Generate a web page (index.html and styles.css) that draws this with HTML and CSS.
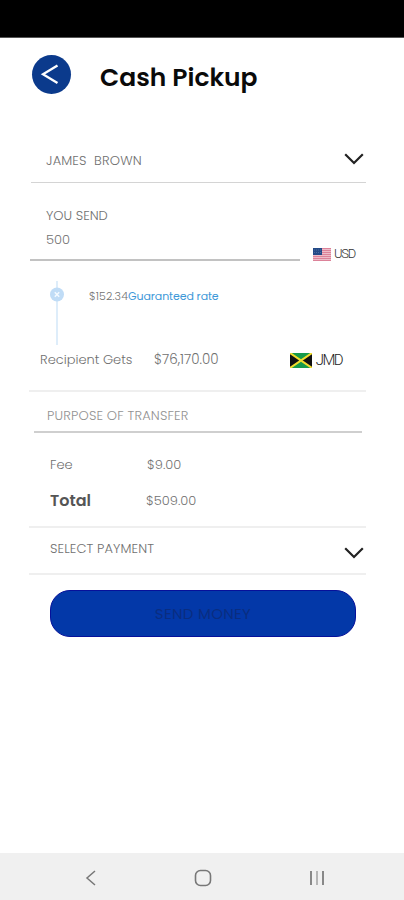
FILE: index.html
```html
<!DOCTYPE html>
<html lang="en">
<head>
  <meta charset="UTF-8">
  <meta name="viewport" content="width=device-width, initial-scale=1.0">
  <title>Cash Pickup</title>
  <link rel="stylesheet" href="styles.css">
</head>
<body>
  <div class="status-bar"></div>

  <!-- Header -->
  <header class="header">
    <button class="back-btn" type="button" aria-label="Back">
      <svg width="39" height="39" viewBox="0 0 39 39" fill="none" stroke="#fff" stroke-width="2.3">
        <path d="M25.5 10.5 L11 19.3 L25.5 28"/>
      </svg>
    </button>
    <h1>Cash Pickup</h1>
  </header>

  <main>
    <!-- Recipient -->
    <div class="select-row recipient">
      <span class="recipient-name">JAMES&nbsp; BROWN</span>
      <svg class="chevron" width="20" height="12" viewBox="0 0 20 12" fill="none" stroke="#222" stroke-width="2.2">
        <path d="M1.2 1.2 L10 10 L18.8 1.2"/>
      </svg>
    </div>

    <!-- Amount -->
    <div class="send">
      <div class="amount">
        <label class="send-label">YOU SEND</label>
        <span class="send-value">500</span>
      </div>
      <div class="currency usd">
        <svg width="18" height="13" viewBox="0 0 18 13">
          <rect width="18" height="13" fill="#eebcc8"/>
          <path d="M0 .5H18M0 2.5H18M0 4.5H18M0 6.5H18M0 8.5H18M0 10.5H18M0 12.5H18" stroke="#dc8299"/>
          <rect width="9" height="7" fill="#244a87"/>
          <path d="M1 2H8M1 4.5H8" stroke="#4a6a9d" stroke-dasharray="1 1"/>
        </svg>
        <span class="usd-code">USD</span>
      </div>
    </div>

    <!-- Exchange rate -->
    <div class="rate">
      <svg class="rate-line" width="16" height="64" viewBox="0 0 16 64" fill="none">
        <path d="M8 0V64" stroke="#deedfa" stroke-width="2"/>
        <circle cx="8" cy="13.5" r="7" fill="#c0dcf6"/>
        <path d="M5.8 11.3L10.2 15.7M10.2 11.3L5.8 15.7" stroke="#f4faff" stroke-width="1.5"/>
      </svg>
      <span class="rate-value">$152.34</span><span class="rate-label">Guaranteed rate</span>
    </div>

    <div class="gets">
      <span class="gets-label">Recipient Gets</span>
      <span class="gets-value">$76,170.00</span>
      <div class="currency">
        <svg width="22" height="15" viewBox="0 0 22 15">
          <rect width="22" height="15" rx="1" fill="#16994b"/>
          <path d="M0 0L11 7.5L0 15ZM22 0L11 7.5L22 15Z" fill="#111"/>
          <path d="M0 0L22 15M22 0L0 15" stroke="#f2dc2e" stroke-width="2"/>
        </svg>
        <span class="jmd-code">JMD</span>
      </div>
    </div>

    <div class="purpose"><span>PURPOSE OF TRANSFER</span></div>

    <!-- Summary -->
    <div class="summary">
      <span class="fee-label">Fee</span>
      <span class="fee-value">$9.00</span>
      <span class="total-label">Total</span>
      <span class="total-value">$509.00</span>
    </div>

    <div class="select-row payment">
      <span class="payment-label">SELECT PAYMENT</span>
      <svg class="chevron" width="20" height="12" viewBox="0 0 20 12" fill="none" stroke="#222" stroke-width="2.2">
        <path d="M1.2 1.2 L10 10 L18.8 1.2"/>
      </svg>
    </div>

    <button class="send-btn" type="button"><span>SEND MONEY</span></button>
  </main>

  <!-- Android navigation -->
  <nav class="nav-bar">
    <svg width="12" height="16" viewBox="0 0 12 16" fill="none" stroke="#777" stroke-width="1.5">
      <path d="M10 1L2 8L10 15"/>
    </svg>
    <svg width="18" height="18" viewBox="0 0 18 18" fill="none" stroke="#777" stroke-width="1.6">
      <rect x="1.5" y="1.5" width="15" height="15" rx="5"/>
    </svg>
    <svg width="16" height="16" viewBox="0 0 16 16" fill="none" stroke-width="2">
      <path d="M2 1V15M14 1V15" stroke="#888"/>
      <path d="M8 1V15" stroke="#b5b5b5"/>
    </svg>
  </nav>
</body>
</html>
```
FILE: styles.css
```css
* {
  box-sizing: border-box;
}

body {
  margin: 0;
  height: 900px;
  display: flex;
  flex-direction: column;
  background-color: #fff;
  color: #707070;
  font-family: "Poppins", "Inter", sans-serif;
  font-size: 13px;
  font-weight: 300;
  line-height: 16px;
  white-space: nowrap;
}

.status-bar {
  height: 38px;
  background-color: #000;
  border-bottom: 1px solid #555;
}

.header {
  height: 74px;
  padding: 17px 32px 0;
  display: flex;
  align-items: flex-start;
}

.back-btn {
  width: 39px;
  height: 39px;
  padding: 0;
  border: none;
  border-radius: 50%;
  background-color: #0b3a8c;
}

.back-btn svg {
  display: block;
}

h1 {
  margin: 7px 0 0 29px;
  font-size: 25px;
  font-weight: 600;
  line-height: 32px;
  color: #0a0a0a;
}

main {
  flex: 1;
}

.select-row {
  display: flex;
  justify-content: space-between;
  align-items: flex-start;
}

.recipient {
  height: 71px;
  margin: 0 38px 0 31px;
  padding: 41px 2px 0 15px;
  border-bottom: 1px solid #d4d4d4;
}

.recipient-name {
  letter-spacing: 0.15px;
}

/* You send */
.send {
  height: 78px;
  padding-left: 30px;
  display: flex;
}

.amount {
  width: 270px;
  padding: 25px 16px 0;
  display: flex;
  flex-direction: column;
  gap: 8px;
  border-bottom: 2px solid #c2c2c2;
}

.currency {
  display: flex;
  align-items: center;
  font-family: "Roboto", sans-serif;
}

.usd {
  height: 16px;
  margin: 63px 0 0 13px;
  gap: 3px;
}

.usd-code {
  letter-spacing: -1.3px;
  color: #333;
}

/* Rate */
.rate {
  height: 64px;
  margin-top: 20px;
  padding-left: 49px;
  display: flex;
  align-items: flex-start;
  font-size: 11px;
}

.rate-value {
  margin: 7px 0 0 24px;
  letter-spacing: 0.15px;
}

.rate-label {
  margin-top: 7px;
  font-weight: 400;
  letter-spacing: -0.1px;
  color: #3d98d8;
}

.gets {
  height: 47px;
  margin: 0 38px 0 29px;
  padding: 7px 24px 0 11px;
  display: flex;
  align-items: flex-start;
  border-bottom: 2px solid #efefef;
}

.gets-label {
  width: 114px;
}

.gets-value {
  flex: 1;
  font-size: 13.5px;
}

.gets .currency {
  gap: 4px;
}

.jmd-code {
  font-size: 15px;
  letter-spacing: -1.6px;
  color: #222;
}

.purpose {
  height: 41px;
  margin: 0 42px 0 34px;
  padding: 16px 13px 0;
  border-bottom: 2px solid #cfcfcf;
  letter-spacing: 0.15px;
  color: #929292;
}

.summary {
  height: 95px;
  margin: 0 38px 0 29px;
  padding: 24px 21px 0;
  display: grid;
  grid-template-columns: 97px 1fr;
  grid-template-rows: 16px 16px;
  row-gap: 20px;
  border-bottom: 2px solid #efefef;
}

.total-label {
  font-size: 16px;
  font-weight: 600;
  color: #555;
}

.total-value {
  margin-left: -1px;
}

.payment {
  height: 47px;
  margin: 0 38px 0 29px;
  padding: 13px 2px 0 21px;
  border-bottom: 2px solid #efefef;
}

.payment-label {
  letter-spacing: 0.1px;
}

.payment .chevron {
  margin-top: 6px;
}

.send-btn {
  display: block;
  width: 306px;
  height: 47px;
  margin: 15px 0 0 50px;
  padding: 0;
  border: 1px solid #06109a;
  border-radius: 20px;
  background-color: #0338a8;
  color: #0a2d80;
  font-family: inherit;
  font-size: 15px;
  letter-spacing: 0.3px;
}

.nav-bar {
  height: 47px;
  padding: 2px 79px 0 85px;
  display: flex;
  justify-content: space-between;
  align-items: center;
  background-color: #f0f0f0;
}
```
